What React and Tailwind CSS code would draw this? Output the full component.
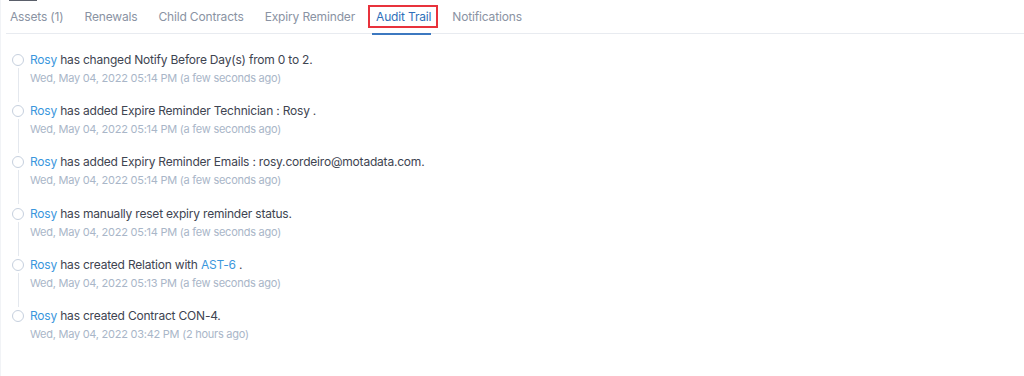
import React from "react";

const items = [
  { parts: [{ t: "has changed Notify Before Day(s) from 0 to 2." }], date: "Wed, May 04, 2022 05:14 PM (a few seconds ago)" },
  { parts: [{ t: "has added Expire Reminder Technician : Rosy ." }], date: "Wed, May 04, 2022 05:14 PM (a few seconds ago)" },
  { parts: [{ t: "has added Expiry Reminder Emails : rosy.cordeiro@motadata.com." }], date: "Wed, May 04, 2022 05:14 PM (a few seconds ago)" },
  { parts: [{ t: "has manually reset expiry reminder status." }], date: "Wed, May 04, 2022 05:14 PM (a few seconds ago)" },
  { parts: [{ t: "has created Relation with " }, { t: "AST-6", link: true }, { t: " ." }], date: "Wed, May 04, 2022 05:13 PM (a few seconds ago)" },
  { parts: [{ t: "has created Contract CON-4." }], date: "Wed, May 04, 2022 03:42 PM (2 hours ago)", last: true },
];

const tabs = ["Assets (1)", "Renewals", "Child Contracts", "Expiry Reminder", "Audit Trail", "Notifications"];

export default function App() {
  return (
    <div className="w-[1024px] h-[376px] bg-white border-l border-[#f1f3f6] font-['Inter',sans-serif] overflow-hidden">
      <div className="h-px w-[28px] ml-[8px] bg-[#5a5f6a]" />
      <div className="flex items-end gap-[21px] pl-[4px] border-b border-[#e8ebf0] h-[33px] ml-[5px]">
        {tabs.map((t) => {
          const active = t === "Audit Trail";
          return (
            <div key={t} className="relative h-full flex items-center">
              <span className={`text-[12px] tracking-[-0.16px] ${active ? "text-[#2f6fba]" : "text-[#8a93a3]"}`}>{t}</span>
              {active && (
                <>
                  <span className="absolute left-[-4px] right-0 bottom-[-2px] h-[2px] bg-[#3c78c0]" />
                  <span className="absolute left-[-8px] right-[-7px] top-[4px] bottom-[5px] border-2 border-[#e8323c]" />
                </>
              )}
            </div>
          );
        })}
      </div>
      <div className="pt-[17px] pl-[11px]">
        {items.map((it, i) => (
          <div key={i} className="flex h-[51.2px]">
            <div className="w-[12px] flex flex-col items-center mr-[6px]">
              <div className="w-[12px] h-[12px] rounded-full border-[1.5px] border-[#c6d0de] mt-[3px] shrink-0" />
              {!it.last && <div className="w-px bg-[#e4e8ee] mt-[2px] h-[34px]" />}
            </div>
            <div className="flex flex-col">
              <div className="text-[12px] leading-[18px] tracking-[-0.2px] text-[#3e4451]">
                <span className="text-[#3b97dd]">Rosy</span>{" "}
                {it.parts.map((p, j) => (
                  <span key={j} className={p.link ? "text-[#3b97dd]" : ""}>{p.t}</span>
                ))}
              </div>
              <div className="text-[11px] leading-[17px] tracking-[-0.25px] text-[#a9b6c8] mt-[1px]">{it.date}</div>
            </div>
          </div>
        ))}
      </div>
    </div>
  );
}
